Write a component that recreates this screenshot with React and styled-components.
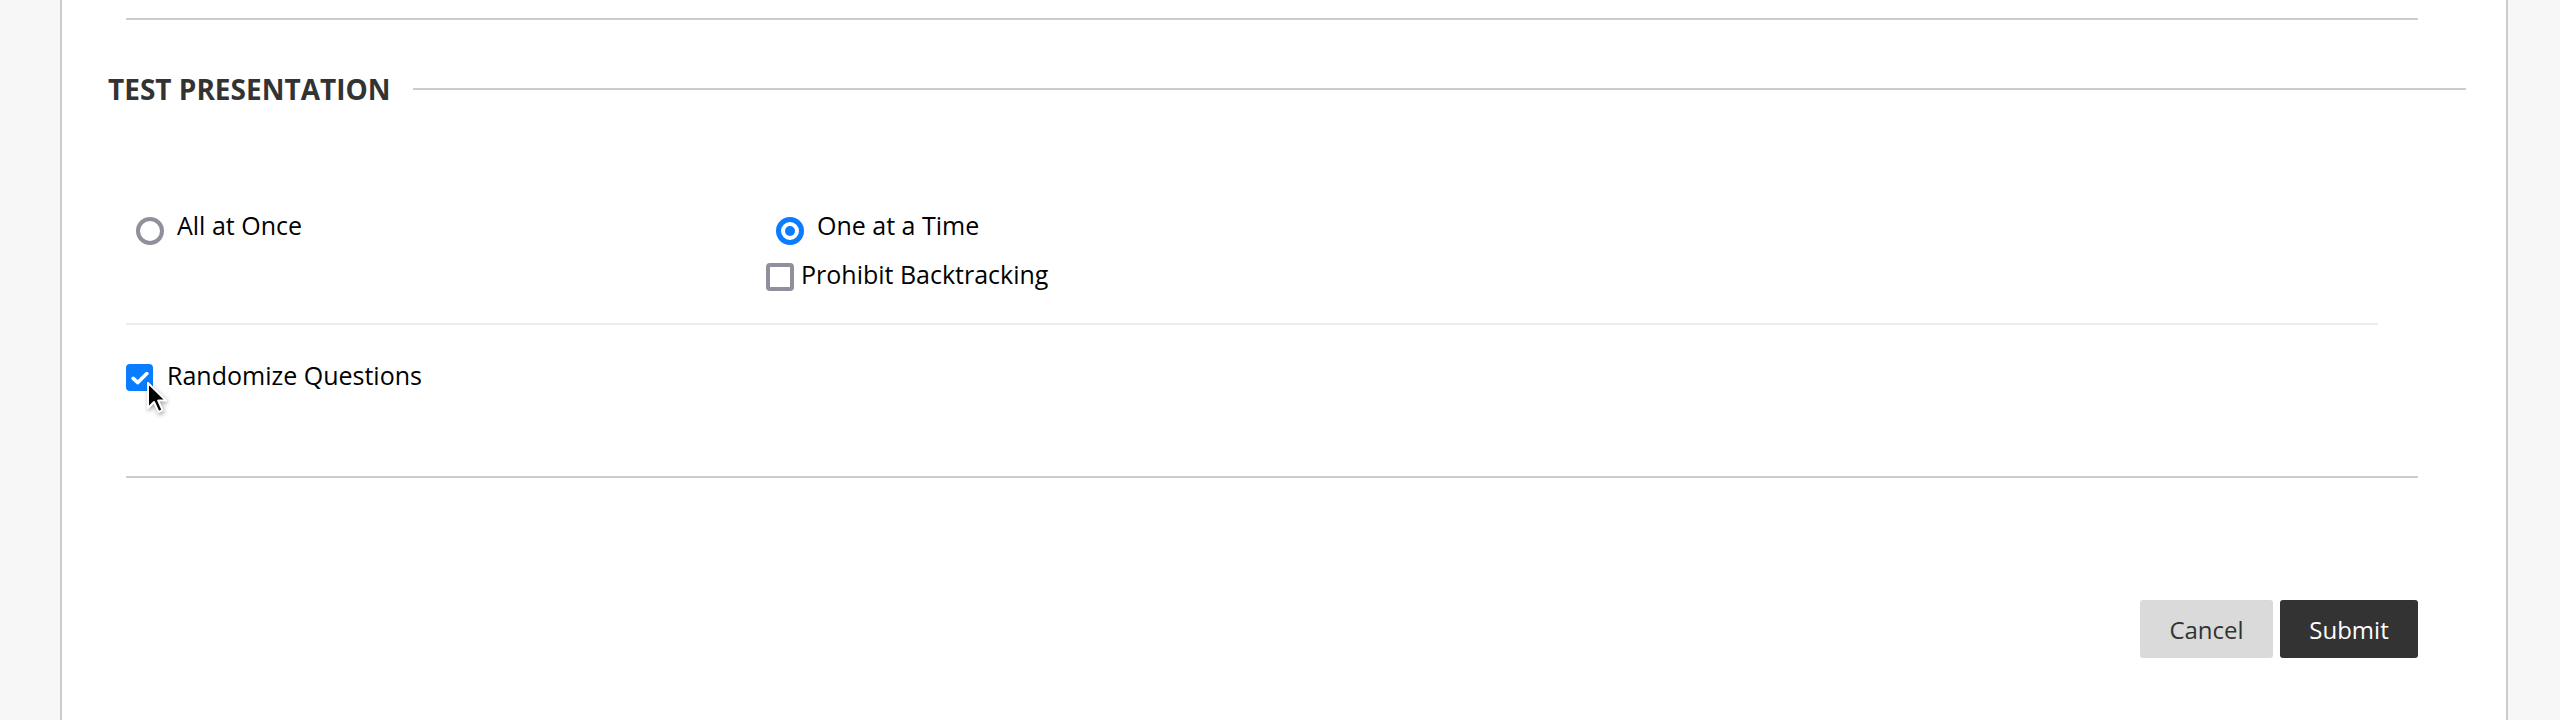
import React, { useState } from 'react';
import styled, { createGlobalStyle } from 'styled-components';

const GlobalStyle = createGlobalStyle`
  body {
    margin: 0;
    font-family: "Open Sans", "Noto Sans", sans-serif;
    color: #000;
  }
`;

const Page = styled.div`
  display: flex;
  height: 720px;
  background-color: #f7f7f7;
  overflow: hidden;
`;

const Gutter = styled.div`
  width: ${(p) => p.w}px;
  flex-shrink: 0;
`;

const Panel = styled.div`
  width: 2444px;
  flex-shrink: 0;
  background: #fff;
  border-left: 2px solid #ccc;
  border-right: 2px solid #ccc;
`;

const Rule = styled.div`
  height: 2px;
  background: ${(p) => p.color || '#ccc'};
  margin: ${(p) => p.m};
`;

const SectionHeader = styled.div`
  display: flex;
  align-items: center;
  margin-top: 50px;
  padding: 0 40px 0 46px;
`;

const Heading = styled.h2`
  margin: 0;
  font-size: 28px;
  line-height: 38px;
  font-weight: 700;
  color: #333;
  white-space: nowrap;
`;

const HeaderLine = styled.div`
  flex: 1;
  height: 2px;
  background: #ccc;
  margin-left: 22px;
`;

const Options = styled.div`
  padding: 0 88px 0 64px;
`;

const ModeRow = styled.div`
  display: grid;
  grid-template-columns: 640px 1fr;
  margin-top: 100px;
`;

const Column = styled.div`
  display: flex;
  flex-direction: column;
  gap: 12px;
`;

const Option = styled.label`
  position: relative;
  display: flex;
  align-items: flex-start;
  gap: ${(p) => p.gap || 13}px;
  margin-left: ${(p) => p.indent || 0}px;
  font-size: 25px;
  line-height: 34px;
  color: #000;
  cursor: pointer;
`;

const Radio = styled.span`
  box-sizing: border-box;
  width: 28px;
  height: 28px;
  margin-top: 9px;
  border-radius: 50%;
  flex-shrink: 0;
  border: ${(p) => (p.checked ? '5px solid #0a7cff' : '4px solid #918f9c')};
  display: flex;
  align-items: center;
  justify-content: center;

  &::after {
    content: '';
    display: ${(p) => (p.checked ? 'block' : 'none')};
    width: 10px;
    height: 10px;
    border-radius: 50%;
    background: #0a7cff;
  }
`;

const Box = styled.span`
  box-sizing: border-box;
  width: ${(p) => p.size || 28}px;
  height: ${(p) => p.size || 28}px;
  margin-top: 6px;
  flex-shrink: 0;
  border-radius: 4px;
  border: ${(p) => (p.checked ? 'none' : '4px solid #918f9c')};
  background: ${(p) => (p.checked ? '#0a7cff' : '#fff')};
  display: flex;
  align-items: center;
  justify-content: center;
`;

const RandomRow = styled.div`
  margin-top: 33px;
`;

const Cursor = styled.svg`
  position: absolute;
  left: 20px;
  top: 23px;
  filter: drop-shadow(1px 2px 2px rgba(0, 0, 0, 0.35));
  pointer-events: none;
`;

const Actions = styled.div`
  display: flex;
  justify-content: flex-end;
  gap: 7px;
  margin: 122px 88px 0 0;
`;

const Button = styled.button`
  height: 58px;
  padding: 0;
  width: ${(p) => (p.primary ? 138 : 133)}px;
  border: none;
  border-radius: 3px;
  font-family: "Open Sans", sans-serif;
  font-size: 24px;
  color: ${(p) => (p.primary ? '#fff' : '#333')};
  background: ${(p) => (p.primary ? '#333' : '#dadada')};
  cursor: pointer;
`;

const Check = () => (
  <svg width="18" height="14" viewBox="0 0 18 14">
    <path d="M2.2 7.4 L6.8 11.6 L15.8 2.6" fill="none" stroke="#fff" strokeWidth="3.6" strokeLinecap="round" strokeLinejoin="round" />
  </svg>
);

export default function App() {
  const [mode, setMode] = useState('one');
  const [backtrack, setBacktrack] = useState(false);
  const [random, setRandom] = useState(true);

  return (
    <Page>
      <GlobalStyle />
      <Gutter w={60} />
      <Panel>
        <Rule m="18px 88px 0 64px" />
        <SectionHeader>
          <Heading>TEST PRESENTATION</Heading>
          <HeaderLine />
        </SectionHeader>
        <Options>
          <ModeRow>
            <Column>
              <Option indent={10} gap={13} onClick={() => setMode('all')}>
                <Radio checked={mode === 'all'} />
                All at Once
              </Option>
            </Column>
            <Column>
              <Option indent={10} gap={13} onClick={() => setMode('one')}>
                <Radio checked={mode === 'one'} />
                One at a Time
              </Option>
              <Option gap={7} onClick={() => setBacktrack(!backtrack)}>
                <Box checked={backtrack}>{backtrack && <Check />}</Box>
                Prohibit Backtracking
              </Option>
            </Column>
          </ModeRow>
          <Rule color="#ebebeb" m="32px 40px 0 0" />
          <RandomRow>
            <Option gap={14} onClick={() => setRandom(!random)}>
              <Box size={27} checked={random}>{random && <Check />}</Box>
              Randomize Questions
              <Cursor width="24" height="36" viewBox="0 0 24 36">
                <path d="M2 2 L2 27 L8 21 L12.5 31 L16.5 29.2 L12.2 19.6 L20 19.6 Z" fill="#000" stroke="#fff" strokeWidth="2" strokeLinejoin="round" />
              </Cursor>
            </Option>
          </RandomRow>
          <Rule m="84px 0 0 0" />
        </Options>
        <Actions>
          <Button>Cancel</Button>
          <Button primary>Submit</Button>
        </Actions>
      </Panel>
      <Gutter w={52} />
    </Page>
  );
}
